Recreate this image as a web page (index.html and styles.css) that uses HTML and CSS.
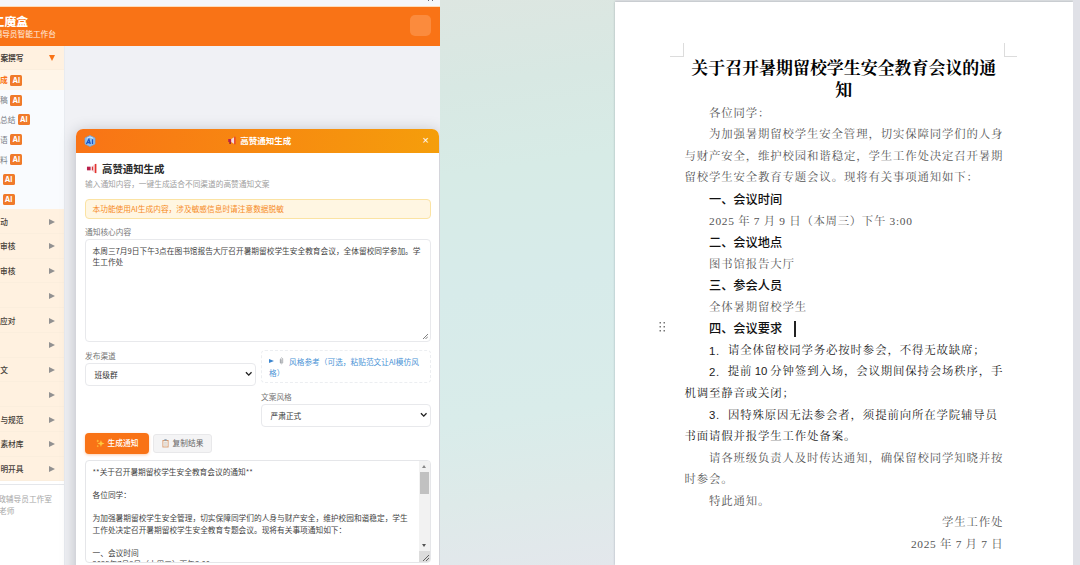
FILE: index.html
```html
<!DOCTYPE html>
<html lang="zh-CN">
<head>
<meta charset="utf-8">
<title>高赞通知生成</title>
<link rel="stylesheet" href="styles.css">
</head>
<body>
<div class="screen">
  <section class="app">
    <div class="strip"><i></i><i></i></div>
    <header class="topbar">
      <div class="brand"><div class="clip name">工魔盒</div><div class="clip tagline">辅导员智能工作台</div></div>
      <span class="topbtn"></span>
    </header>
    <div class="main">
      <nav class="side">
        <div class="group open"><span class="clip">案撰写</span><b class="down"></b></div>
        <div class="items">
          <div class="item on"><span>成</span><em>AI</em></div>
          <div class="item"><span>稿</span><em>AI</em></div>
          <div class="item wide"><span>总结</span><em>AI</em></div>
          <div class="item"><span>语</span><em>AI</em></div>
          <div class="item"><span>料</span><em>AI</em></div>
          <div class="item none"><em>AI</em></div>
          <div class="item none"><em>AI</em></div>
        </div>
        <div class="group"><span class="clip w1">动</span><b></b></div>
        <div class="group"><span class="clip w2">审核</span><b></b></div>
        <div class="group"><span class="clip w2">审核</span><b></b></div>
        <div class="group"><span></span><b></b></div>
        <div class="group"><span class="clip w2">应对</span><b></b></div>
        <div class="group"><span></span><b></b></div>
        <div class="group"><span class="clip w1">文</span><b></b></div>
        <div class="group"><span></span><b></b></div>
        <div class="group"><span class="clip">与规范</span><b></b></div>
        <div class="group"><span class="clip">素材库</span><b></b></div>
        <div class="group"><span class="clip">明开具</span><b></b></div>
        <footer class="foot"><div class="clip f1">政辅导员工作室</div><div class="clip f2">老师</div></footer>
      </nav>
      <div class="stage">
        <div class="modal">
          <div class="mhead">
            <svg class="logo" viewBox="0 0 12 12"><path d="M6 .5 11 3v6l-5 2.5L1 9V3z" fill="#8fc0f0" stroke="#6ea6e2" stroke-width=".7"/><path d="M2.4 9 4.9 4.3 6.3 9M3.3 7.6h2.6M8.5 4.3V9" fill="none" stroke="#1a55c4" stroke-width="1.3"/><path d="M3 3.2 6 2l3 1.2" fill="none" stroke="#e4f2ff" stroke-width=".8"/></svg>
            <div class="mtitle"><svg viewBox="0 0 12 12"><path d="M1 4h4v4H1z" fill="#b9204b"/><path d="M5 4 9 1.5v9L5 8z" fill="#f3d9df"/><path d="M9 1h1.6v10H9z" fill="#e3342f"/><path d="M2.5 8h2v2.5h-2z" fill="#8c1c3c"/></svg>高赞通知生成</div>
            <span class="close">×</span>
          </div>
          <div class="mbody">
            <h2><svg viewBox="0 0 12 12"><path d="M.5 4h4v4h-4z" fill="#b9204b"/><path d="M5 4 9 1.5v9L5 8z" fill="#f3d0d4"/><path d="M9 1h1.8v10H9z" fill="#e3342f"/><path d="M6 4.2h1.2v3.6H6z" fill="#dc3a3a"/></svg>高赞通知生成</h2>
            <p class="sub">输入通知内容，一键生成适合不同渠道的高赞通知文案</p>
            <div class="warn">本功能使用AI生成内容，涉及敏感信息时请注意数据脱敏</div>
            <div class="label">通知核心内容</div>
            <div class="area"><div>本周三7月9日下午3点在图书馆报告大厅召开暑期留校学生安全教育会议，全体留校同学参加。学</div><div>生工作处</div><svg class="grip" viewBox="0 0 6 6"><path d="M0 6 6 0M3 6l3-3"/></svg></div>
            <div class="cols">
              <div class="col left"><div class="label">发布渠道</div><div class="select"><span>班级群</span><svg viewBox="0 0 8 6"><path d="m1 1.2 3 3 3-3"/></svg></div></div>
              <div class="col right">
                <div class="ref"><div><i></i><svg viewBox="0 0 6 10"><path d="M1.5 3v4.5q1.5 2 3 0V2q-1.5-2-2.5 0v5h1.3V3" fill="none" stroke="#8d9299" stroke-width=".8"/></svg>风格参考（可选，粘贴范文让AI模仿风</div><div>格）</div></div>
                <div class="label">文案风格</div><div class="select"><span>严肃正式</span><svg viewBox="0 0 8 6"><path d="m1 1.2 3 3 3-3"/></svg></div>
              </div>
            </div>
            <div class="actions">
              <div class="primary"><svg viewBox="0 0 10 10"><path d="m5.5 1 1 3L9.5 5l-3 1-1 3-1-3-3-1 3-1zM2 .5l.5 1.3 1.2.4-1.2.5L2 4l-.5-1.3-1.2-.5 1.2-.4zM2 6.5l.4 1 1 .4-1 .4-.4 1-.4-1-1-.4 1-.4z" fill="#ffc83d"/></svg>生成通知</div>
              <div class="copy"><svg viewBox="0 0 8 10"><path d="M.5 1h7v8.5h-7z" fill="#d99a6c"/><path d="M1.5 2.2h5v6.3h-5z" fill="#f5f3f0"/><path d="M2.7 0h2.6v2H2.7z" fill="#91a3b4"/><path d="M2.4 4h3.2M2.4 5.5h3.2M2.4 7h3.2" stroke="#bcae9f" stroke-width=".5"/></svg>复制结果</div>
            </div>
            <div class="output">
              <div class="text">**关于召开暑期留校学生安全教育会议的通知**

各位同学：

为加强暑期留校学生安全管理，切实保障同学们的人身与财产安全，维护校园和谐稳定，学生
工作处决定召开暑期留校学生安全教育专题会议。现将有关事项通知如下：

一、会议时间
2025年7月9日（本周三）下午3:00</div>
              <div class="scroll"><i class="up"></i><i class="thumb"></i><i class="dn"></i><span><svg viewBox="0 0 6 6"><path d="M0 6 6 0M3 6l3-3"/></svg></span></div>
            </div>
          </div>
        </div>
      </div>
    </div>
  </section>
  <section class="gap"></section>
  <section class="paper">
    <div class="corners"><i></i><i></i></div>
    <h1><span>关于召开暑期留校学生安全教育会议的通</span><br>知</h1>
    <div class="doc">
      <p class="in">各位同学：</p>
      <p class="in">为加强暑期留校学生安全管理，切实保障同学们的人身</p>
      <p>与财产安全，维护校园和谐稳定，学生工作处决定召开暑期</p>
      <p>留校学生安全教育专题会议。现将有关事项通知如下：</p>
      <p class="in hd">一、会议时间</p>
      <p class="in"><span class="date">2025 年 7 月 9 日（本周三）下午 3:00</span></p>
      <p class="in hd">二、会议地点</p>
      <p class="in">图书馆报告大厅</p>
      <p class="in hd">三、参会人员</p>
      <p class="in">全体暑期留校学生</p>
      <p class="in hd row4"><svg class="handle" viewBox="0 0 7 10"><path d="M.5 0H2v1.5H.5zM4.5 0H6v1.5H4.5zM.5 4H2v1.5H.5zM4.5 4H6v1.5H4.5zM.5 8H2v1.5H.5zM4.5 8H6v1.5H4.5z"/></svg>四、会议要求<i class="caret"></i></p>
      <p class="in kai"><b>1.</b>请全体留校同学务必按时参会，不得无故缺席；</p>
      <p class="in kai"><b>2.</b>提前<u>10</u>分钟签到入场，会议期间保持会场秩序，手</p>
      <p class="kai">机调至静音或关闭；</p>
      <p class="in kai"><b>3.</b>因特殊原因无法参会者，须提前向所在学院辅导员</p>
      <p class="kai">书面请假并报学生工作处备案。</p>
      <p class="in">请各班级负责人及时传达通知，确保留校同学知晓并按</p>
      <p>时参会。</p>
      <p class="in">特此通知。</p>
      <p class="end">学生工作处</p>
      <p class="end"><span class="date">2025 年 7 月 7 日</span></p>
    </div>
  </section>
  <section class="edge"></section>
</div>
</body>
</html>
```
FILE: styles.css
```css
* { box-sizing: border-box; }
body { margin: 0; font-family: "Noto Sans CJK SC", sans-serif; font-size: 7.7px; line-height: 11.6px; }
h1, h2, p { margin: 0; }
.screen { width: 1080px; height: 565px; overflow: hidden; display: flex; background: #dcdfe1; }
.app { width: 440px; flex: none; display: flex; flex-direction: column; background: #f0f1f5; overflow: hidden; }
.strip { height: 6.5px; flex: none; background: #f5f6f9; border-bottom: 1px solid #ffdcb8; display: flex; justify-content: flex-end; gap: 3px; padding-right: 7px; }
.strip i { width: 1px; height: 1px; background: #667; }
.topbar { height: 39px; flex: none; background: #f97316; display: flex; justify-content: space-between; padding: 8.5px 9.5px 0 0; color: #fff; }
.clip { display: flex; justify-content: flex-end; white-space: nowrap; width: 23.5px; flex: none; }
.clip.w1 { width: 8px; }
.clip.w2 { width: 15.5px; }
.clip.name { width: 28px; font-size: 11.8px; font-weight: 900; line-height: 11px; }
.clip.tagline { width: 56px; line-height: 10px; margin-top: 3px; color: #fff0e2; }
.topbtn { width: 21px; height: 21px; border-radius: 5px; background: #fb8b3d; }
.main { flex: 1; display: flex; min-height: 0; }
.side { width: 65px; flex: none; background: #fff; border-right: 1px solid #e8ebf0; }
.group { height: 24.75px; display: flex; align-items: center; justify-content: space-between; padding: 1px 9px 0 0; background: #fff1e0; border-bottom: 1px solid #fbeedd; font-weight: 500; color: #454039; }
.group.open { font-weight: 700; }
.group b { border-left: 6px solid #929191; border-top: 3.3px solid transparent; border-bottom: 3.3px solid transparent; }
.group b.down { border: 3.2px solid transparent; border-top: 6.5px solid #f97316; border-bottom: 0; }
.items { background: #f9fbfe; }
.item { height: 19.85px; display: flex; align-items: center; gap: 2.5px; color: #777c85; }
.item.on { background: #fff5e8; color: #f97316; font-weight: 700; }
.item.none { padding-left: 2.5px; }
.item em { width: 12px; height: 11px; border-radius: 1.5px; background: #f07a2a; color: #fff; font: 700 7.4px/11px Inter, sans-serif; text-align: center; }
.foot { margin-top: 3px; border-top: 1px solid #e5e7eb; color: #a6a6a6; padding-top: 8px; }
.clip.f1 { width: 52px; }
.clip.f2 { width: 14.5px; }
.stage { flex: 1; padding: 83.5px 1px 0 11px; min-width: 0; }
.modal { width: 363px; height: 480px; border-radius: 7px; background: #fff; box-shadow: 0 3px 16px rgba(30, 35, 50, .28); }
.mhead { height: 23.5px; border-radius: 7px 7px 0 0; background: linear-gradient(100deg, #f97316, #f59e0b); display: flex; align-items: center; justify-content: space-between; padding: 0 10px 0 8px; color: #fff; }
.logo { width: 12px; height: 12px; }
.mtitle { font-size: 8.5px; font-weight: 700; display: flex; align-items: center; gap: 3px; }
.mtitle svg { width: 10px; height: 9px; }
.close { font: 400 11px/12px "Liberation Sans", sans-serif; margin-top: -2px; }
.mbody { padding: 9px 8.5px 0 9px; }
h2 { font-size: 10.4px; line-height: 14px; display: flex; align-items: center; gap: 4px; color: #2a2a2a; font-weight: 700; }
h2 svg { width: 12px; height: 11px; margin-left: 1px; }
.sub { color: #a0a0a0; margin-top: 2px; }
.warn { margin-top: 9.5px; height: 20px; line-height: 18px; border: 1px solid #fbe3a3; border-radius: 4px; background: #fff6e2; color: #f68b26; padding-left: 6.5px; }
.label { color: #777; height: 11.6px; }
.warn + .label { margin-top: 7px; }
.area { margin-top: 1.4px; height: 103.5px; border: 1px solid #e8e9ec; border-radius: 4px; padding: 5px 6.5px; color: #444; position: relative; white-space: nowrap; }
.grip { position: absolute; right: 2px; bottom: 2px; width: 5px; height: 5px; }
.grip path, .scroll path { fill: none; stroke: #555; stroke-width: .9; }
.cols { display: flex; gap: 5.5px; margin-top: 7.5px; }
.left { width: 170.5px; }
.right { width: 169.5px; }
.select { margin-top: 1.5px; height: 23.5px; border: 1px solid #e8e9ec; border-radius: 4px; display: flex; align-items: center; justify-content: space-between; padding: 0 2.5px 0 8.5px; color: #333; }
.select svg { width: 7.5px; height: 6px; }
.select path { fill: none; stroke: #222; stroke-width: 1.5; }
.ref { height: 33.5px; border: 1px dashed #eceef1; border-radius: 4px; padding: 5px 7px; color: #4b94d6; line-height: 11px; white-space: nowrap; }
.ref div:first-child { display: flex; align-items: center; }
.ref i { border-left: 5px solid #3b86cf; border-top: 2.3px solid transparent; border-bottom: 2.3px solid transparent; }
.ref svg { width: 5px; height: 8px; margin: 0 5px 0 5px; }
.right .label { margin-top: 7.5px; }
.actions { margin-top: 5.5px; display: flex; align-items: center; gap: 4px; }
.primary { width: 64px; height: 21px; border-radius: 4px; background: #f97316; color: #fff; font-weight: 500; display: flex; align-items: center; justify-content: center; gap: 3px; box-shadow: 0 1px 3px rgba(249, 115, 22, .35); }
.primary svg { width: 9px; height: 9px; }
.copy { width: 59px; height: 19px; border-radius: 3px; background: #f4f4f5; border: 1px solid #e8e8ea; color: #666; display: flex; align-items: center; justify-content: center; gap: 4px; }
.copy svg { width: 7px; height: 9px; }
.output { margin-top: 6px; height: 103px; border: 1px solid #e5e6e9; border-radius: 4px; display: flex; justify-content: space-between; overflow: hidden; color: #444; }
.text { white-space: pre; padding: 5px 0 0 6.5px; }
.scroll { width: 11px; flex: none; background: #f2f2f2; display: flex; flex-direction: column; align-items: center; }
.scroll i { flex: none; }
.up { border: 2.5px solid transparent; border-bottom: 3px solid #888; border-top: 0; margin: 4.5px 0 3.5px; }
.thumb { width: 9px; height: 22px; background: #c1c1c1; }
.dn { border: 2.5px solid transparent; border-top: 3px solid #555; border-bottom: 0; margin-top: auto; }
.scroll span { margin-top: 4px; width: 11px; height: 11px; background: #dcdcdc; padding: 4px 0 0 4px; display: flex; flex: none; }
.scroll svg { width: 6px; height: 6px; }
.gap { width: 175px; flex: none; background: linear-gradient(172deg, #dde6e1 0%, #d8e8e3 15%, #d7ebe6 30%, #d7ebea 50%, #d9ecea 72%, #deeae9 86%, #e3e7ec 100%); }
.paper { width: 457.5px; flex: none; margin-top: 2px; background: #fff; box-shadow: 0 0 2px rgba(60, 70, 80, .35); color: #000; padding-top: 41px; }
.corners { display: flex; justify-content: space-between; padding: 0 56px 0 55px; height: 13px; }
.corners i { width: 14px; height: 14px; border: solid #dcdcdc; border-width: 0 1px 1px 0; }
.corners i + i { border-width: 0 0 1px 1px; width: 13px; }
h1 { font: 700 16.95px/21.6px "Noto Serif CJK SC", "Noto Serif SC", "Noto Sans CJK SC", serif; text-align: center; white-space: nowrap; }
.doc { width: 318.8px; margin: 3.5px 0 0 69.5px; font: 400 11.4px/21.57px "Liberation Serif", "Noto Serif CJK SC", serif; letter-spacing: .87px; color: #555; }
.doc p { height: 21.57px; white-space: nowrap; display: flex; align-items: center; }
.doc .in { padding-left: 24.5px; }
.doc .hd { font-family: "Noto Sans CJK SC", sans-serif; font-weight: 500; font-size: 12.2px; letter-spacing: 0; color: #111; }
.row4 { position: relative; }
.handle { position: absolute; left: -26px; top: 4px; width: 7px; height: 10px; fill: #777; }
.caret { width: 1.5px; height: 16px; background: #222; margin-left: 12px; }
.doc .kai { color: #1c1c1c; }
.kai b { font: 400 11.4px "Liberation Sans", sans-serif; width: 19px; letter-spacing: .6px; }
.kai u { font-family: "Liberation Sans", sans-serif; text-decoration: none; letter-spacing: 0; margin: 0 3px 0 2.5px; }
.doc .end { justify-content: flex-end; }
.date { letter-spacing: .7px; }
.edge { flex: 1; background: #e0e1e7; }
```
